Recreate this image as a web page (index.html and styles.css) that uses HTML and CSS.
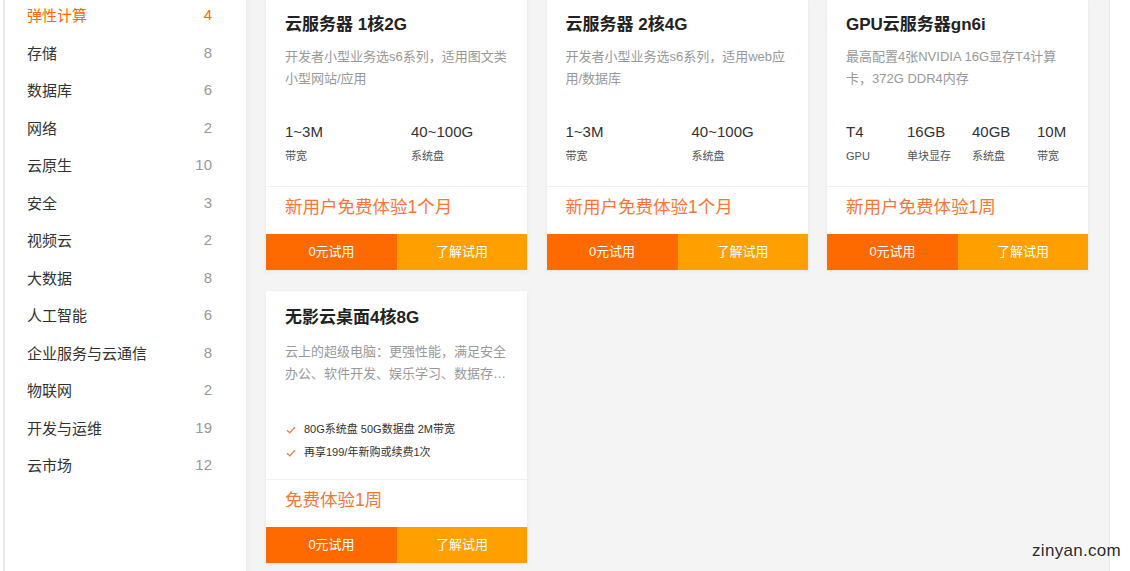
FILE: index.html
```html
<!DOCTYPE html>
<html lang="zh-CN">
<head>
<meta charset="utf-8">
<title>产品试用</title>
<link rel="stylesheet" href="styles.css">
</head>
<body>
<div class="page">
  <div class="edge-left"></div>
  <aside class="sidebar">
    <ul class="cat-list">
      <li class="cat active"><span class="cat-name">弹性计算</span><span class="cat-count">4</span></li>
      <li class="cat"><span class="cat-name">存储</span><span class="cat-count">8</span></li>
      <li class="cat"><span class="cat-name">数据库</span><span class="cat-count">6</span></li>
      <li class="cat"><span class="cat-name">网络</span><span class="cat-count">2</span></li>
      <li class="cat"><span class="cat-name">云原生</span><span class="cat-count">10</span></li>
      <li class="cat"><span class="cat-name">安全</span><span class="cat-count">3</span></li>
      <li class="cat"><span class="cat-name">视频云</span><span class="cat-count">2</span></li>
      <li class="cat"><span class="cat-name">大数据</span><span class="cat-count">8</span></li>
      <li class="cat"><span class="cat-name">人工智能</span><span class="cat-count">6</span></li>
      <li class="cat"><span class="cat-name">企业服务与云通信</span><span class="cat-count">8</span></li>
      <li class="cat"><span class="cat-name">物联网</span><span class="cat-count">2</span></li>
      <li class="cat"><span class="cat-name">开发与运维</span><span class="cat-count">19</span></li>
      <li class="cat"><span class="cat-name">云市场</span><span class="cat-count">12</span></li>
    </ul>
  </aside>
  <main class="content">
    <div class="grid">
      <div class="card">
        <div class="card-body">
          <h3 class="card-title">云服务器 1核2G</h3>
          <p class="card-desc">开发者小型业务选s6系列，适用图文类小型网站/应用</p>
          <div class="specs specs-2">
            <div class="spec"><div class="spec-val">1~3M</div><div class="spec-label">带宽</div></div>
            <div class="spec"><div class="spec-val">40~100G</div><div class="spec-label">系统盘</div></div>
          </div>
        </div>
        <div class="card-offer">新用户免费体验1个月</div>
        <div class="card-actions"><a class="btn btn-try">0元试用</a><a class="btn btn-more">了解试用</a></div>
      </div>
      <div class="card">
        <div class="card-body">
          <h3 class="card-title">云服务器 2核4G</h3>
          <p class="card-desc">开发者小型业务选s6系列，适用web应用/数据库</p>
          <div class="specs specs-2">
            <div class="spec"><div class="spec-val">1~3M</div><div class="spec-label">带宽</div></div>
            <div class="spec"><div class="spec-val">40~100G</div><div class="spec-label">系统盘</div></div>
          </div>
        </div>
        <div class="card-offer">新用户免费体验1个月</div>
        <div class="card-actions"><a class="btn btn-try">0元试用</a><a class="btn btn-more">了解试用</a></div>
      </div>
      <div class="card">
        <div class="card-body">
          <h3 class="card-title">GPU云服务器gn6i</h3>
          <p class="card-desc">最高配置4张NVIDIA 16G显存T4计算卡，372G DDR4内存</p>
          <div class="specs specs-4">
            <div class="spec"><div class="spec-val">T4</div><div class="spec-label">GPU</div></div>
            <div class="spec"><div class="spec-val">16GB</div><div class="spec-label">单块显存</div></div>
            <div class="spec"><div class="spec-val">40GB</div><div class="spec-label">系统盘</div></div>
            <div class="spec"><div class="spec-val">10M</div><div class="spec-label">带宽</div></div>
          </div>
        </div>
        <div class="card-offer">新用户免费体验1周</div>
        <div class="card-actions"><a class="btn btn-try">0元试用</a><a class="btn btn-more">了解试用</a></div>
      </div>
      <div class="card card-desktop">
        <div class="card-body">
          <h3 class="card-title">无影云桌面4核8G</h3>
          <p class="card-desc">云上的超级电脑：更强性能，满足安全办公、软件开发、娱乐学习、数据存储等多种场景</p>
          <ul class="features">
            <li class="feature"><svg class="check" viewBox="0 0 10 8" width="10" height="8"><path d="M1 4.2 L3.8 6.8 L9 1.2" fill="none" stroke="#f0824a" stroke-width="1.3"/></svg>80G系统盘 50G数据盘 2M带宽</li>
            <li class="feature"><svg class="check" viewBox="0 0 10 8" width="10" height="8"><path d="M1 4.2 L3.8 6.8 L9 1.2" fill="none" stroke="#f0824a" stroke-width="1.3"/></svg>再享199/年新购或续费1次</li>
          </ul>
        </div>
        <div class="card-offer">免费体验1周</div>
        <div class="card-actions"><a class="btn btn-try">0元试用</a><a class="btn btn-more">了解试用</a></div>
      </div>
    </div>
  </main>
  <div class="edge-right"></div>
</div>
<div class="watermark">zinyan.com</div>
</body>
</html>
```

FILE: styles.css
```css
* { box-sizing: border-box; }
html, body {
  margin: 0;
  padding: 0;
  background: #ffffff;
  overflow: hidden;
}
body {
  font-family: "Liberation Sans", "Noto Sans CJK SC", sans-serif;
  color: #333;
  width: 1130px;
  height: 571px;
  position: relative;
}
.page {
  display: flex;
  margin-top: -2px;
  height: 600px;
}
.edge-left {
  width: 3px;
  background: #fff;
  border-right: 2px solid #e9e9e9;
  flex: 0 0 5px;
}
.sidebar {
  flex: 0 0 241px;
  background: #fff;
}
.cat-list {
  list-style: none;
  margin: 0;
  padding: 0 34px 0 22px;
  margin-top: -2px;
}
.cat {
  display: flex;
  justify-content: space-between;
  align-items: center;
  height: 37.5px;
  font-size: 15px;
  color: #333;
}
.cat-count {
  color: #999;
  font-size: 15px;
}
.cat.active .cat-name,
.cat.active .cat-count {
  color: #ff6a00;
}
.content {
  flex: 0 0 863px;
  background: #f4f4f4;
  padding-left: 20px;
  box-shadow: inset 6px 0 8px -6px rgba(0,0,0,0.06);
}
.edge-right {
  flex: 1;
  background: #fff;
  border-left: 1px solid #e8e8e8;
}
.grid {
  display: grid;
  grid-template-columns: repeat(3, 261px);
  column-gap: 19.5px;
  row-gap: 21px;
}
.card {
  background: #fff;
  height: 272px;
  display: flex;
  flex-direction: column;
  box-shadow: 0 1px 4px rgba(0,0,0,0.06);
}
.card-body {
  height: 189px;
  padding: 15px 19px 0 19px;
  border-bottom: 1px solid #f0f0f0;
}
.card-title {
  margin: 0;
  font-size: 17px;
  line-height: 24px;
  font-weight: bold;
  color: #222;
}
.card-desc {
  margin: 9px 0 0 0;
  font-size: 13px;
  line-height: 22px;
  height: 44px;
  color: #999;
  display: -webkit-box;
  -webkit-line-clamp: 2;
  -webkit-box-orient: vertical;
  overflow: hidden;
}
.card-desktop .card-desc {
  margin-top: 11px;
}
.specs {
  display: grid;
  margin-top: 32px;
}
.specs-2 { grid-template-columns: 126px 1fr; }
.specs-4 { grid-template-columns: 61px 65px 65px 1fr; }
.spec-val {
  font-size: 15px;
  line-height: 20px;
  color: #333;
}
.spec-label {
  margin-top: 6px;
  font-size: 11px;
  line-height: 16px;
  color: #555;
}
.features {
  list-style: none;
  margin: 33px 0 0 0;
  padding: 0;
}
.feature {
  display: flex;
  align-items: center;
  font-size: 11px;
  line-height: 23px;
  height: 23px;
  color: #333;
}
.check {
  margin-left: 1px;
  margin-right: 8px;
}
.card-offer {
  padding: 8px 19px 0;
  height: 47px;
  font-size: 17.5px;
  line-height: 24px;
  color: #f8763a;
}
.card-actions {
  display: flex;
  height: 36px;
}
.btn {
  display: flex;
  align-items: center;
  justify-content: center;
  color: #fff;
  font-size: 13px;
  text-decoration: none;
  padding-bottom: 4px;
}
.btn-try {
  flex: 0 0 131px;
  background: #ff6a00;
}
.btn-more {
  flex: 1;
  background: #ffa000;
}
.watermark {
  position: absolute;
  right: 9px;
  bottom: 10px;
  font-family: "Liberation Sans", sans-serif;
  font-size: 17px;
  color: #2a2a2a;
  letter-spacing: 0.3px;
  text-shadow: 0 0 2px #fff, 0 0 2px #fff, 0 0 3px #fff;
}
```
